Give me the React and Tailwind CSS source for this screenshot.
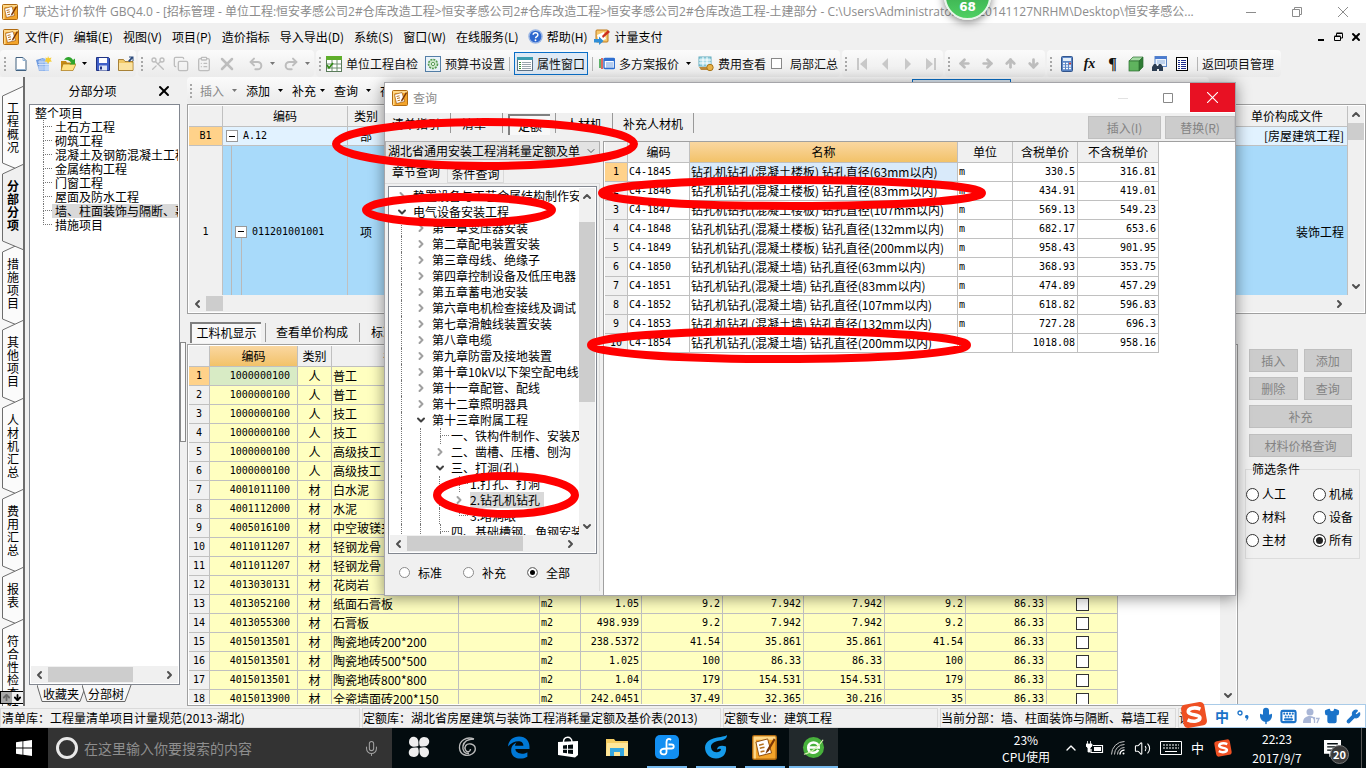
import React from "react";
import clsx from "clsx";
import {
  ArrowDown,
  ArrowLeft,
  ArrowRight,
  ArrowUp,
  ChevronDown,
  ChevronLeft,
  ChevronRight,
  ChevronUp,
  ClipboardList,
  Copy,
  Keyboard,
  Mic,
  Redo2,
  Scissors,
  Shirt,
  Undo2,
  Volume2,
  Wrench,
  X,
} from "lucide-react";

const sideTabs = ["工程概况", "分部分项", "措施项目", "其他项目", "人材机汇总", "费用汇总", "报表", "符合性检查结果"];

const sections = [
  "土石方工程",
  "砌筑工程",
  "混凝土及钢筋混凝土工程",
  "金属结构工程",
  "门窗工程",
  "屋面及防水工程",
  "墙、柱面装饰与隔断、幕墙工程",
  "措施项目",
];

const menus = ["文件(F)", "编辑(E)", "视图(V)", "项目(P)", "造价指标", "导入导出(D)", "系统(S)", "窗口(W)", "在线服务(L)"];

const materials = [
  ["1000000100", "人", "普工"],
  ["1000000100", "人", "普工"],
  ["1000000100", "人", "技工"],
  ["1000000100", "人", "技工"],
  ["1000000100", "人", "高级技工"],
  ["1000000100", "人", "高级技工"],
  ["4001011100", "材", "白水泥"],
  ["4001112000", "材", "水泥"],
  ["4005016100", "材", "中空玻镁夹"],
  ["4011011207", "材", "轻钢龙骨"],
  ["4011011207", "材", "轻钢龙骨"],
  ["4013030131", "材", "花岗岩"],
  ["4013052100", "材", "纸面石膏板", "m2", "1.05", "9.2", "7.942", "7.942", "9.2", "86.33"],
  ["4013055300", "材", "石膏板", "m2", "498.939", "9.2", "7.942", "7.942", "9.2", "86.33"],
  ["4015013501", "材", "陶瓷地砖200*200", "m2", "238.5372", "41.54", "35.861", "35.861", "41.54", "86.33"],
  ["4015013501", "材", "陶瓷地砖500*500", "m2", "1.025", "100", "86.33", "86.33", "100", "86.33"],
  ["4015013501", "材", "陶瓷地砖800*800", "m2", "1.04", "179", "154.531", "154.531", "179", "86.33"],
  ["4015013900", "材", "全瓷墙面砖200*150", "m2", "242.0451", "37.49", "32.365", "30.216", "35", "86.33"],
];

const quotas = [
  ["C4-1845", "楼板", "63", "330.5", "316.81"],
  ["C4-1846", "楼板", "83", "434.91", "419.01"],
  ["C4-1847", "楼板", "107", "569.13", "549.23"],
  ["C4-1848", "楼板", "132", "682.17", "653.6"],
  ["C4-1849", "楼板", "200", "958.43", "901.95"],
  ["C4-1850", "墙", "63", "368.93", "353.75"],
  ["C4-1851", "墙", "83", "474.89", "457.29"],
  ["C4-1852", "墙", "107", "618.82", "596.83"],
  ["C4-1853", "墙", "132", "727.28", "696.3"],
  ["C4-1854", "墙", "200", "1018.08", "958.16"],
];

// level, state, label
const chapters = [
  [0, "closed", "静置设备与工艺金属结构制作安装工程"],
  [0, "open", "电气设备安装工程"],
  [1, "closed", "第一章变压器安装"],
  [1, "closed", "第二章配电装置安装"],
  [1, "closed", "第三章母线、绝缘子"],
  [1, "closed", "第四章控制设备及低压电器"],
  [1, "closed", "第五章蓄电池安装"],
  [1, "closed", "第六章电机检查接线及调试"],
  [1, "closed", "第七章滑触线装置安装"],
  [1, "closed", "第八章电缆"],
  [1, "closed", "第九章防雷及接地装置"],
  [1, "closed", "第十章10kV以下架空配电线路"],
  [1, "closed", "第十一章配管、配线"],
  [1, "closed", "第十二章照明器具"],
  [1, "open", "第十三章附属工程"],
  [2, "leaf", "一、铁构件制作、安装及箱盒"],
  [2, "closed", "二、凿槽、压槽、刨沟"],
  [2, "open", "三、打洞(孔)"],
  [3, "leaf", "1.打孔、打洞"],
  [3, "closed", "2.钻孔机钻孔"],
  [3, "last", "3.堵洞眼"],
  [2, "leaf", "四、基础槽钢、角钢安装"],
];

const AppIcon = ({ className = "size-4" }) => (
  <svg viewBox="0 0 16 16" className={clsx("shrink-0", className)}>
    <rect x="0.5" y="0.5" width="15" height="15" rx="1" fill="#f3a42a" stroke="#b06a10" />
    <path d="M1 1h14v2H1zM1 1h1.500v14H1z" fill="#ffd98a" />
    <path d="M2.500 4.500 L10 2.500 L12.500 11.500 L4.500 13.500Z" fill="#fff" stroke="#8d4a0a" strokeWidth="0.6" />
    <path d="M4.500 6.500 L7.500 5.800 M5 8.500 L8 7.800 M5.500 10.800 L8 10.200" stroke="#b5701e" strokeWidth="1" />
    <path d="M14 2 L9.500 9.500 L8.600 12 L10.800 10.300 L15 3Z" fill="#7a3606" />
  </svg>
);

const Icon = ({ children }) => (
  <svg viewBox="0 0 16 16" className="size-4 shrink-0">
    {children}
  </svg>
);

const NewIcon = () => (
  <Icon>
    <path d="M3 1.500h7l3 3v10H3z" fill="#fff" stroke="#41607f" />
    <path d="M10 1.500v3h3M4 13.500h8" stroke="#8fb0d0" fill="none" />
  </Icon>
);
const BuildingIcon = () => (
  <Icon>
    <path d="M0 4l7-2v13H3z" fill="#6f9be0" />
    <path d="M7 2l6 2v11H7z" fill="#8db4ee" />
    <path d="M2 6h11M2 8.500h11M2 11h11M2 13h11M4 4v11M6 3v12M10 3v12M12 4v11" stroke="#eaf2ff" strokeWidth="0.7" />
    <path d="M12 0l1 2.200 2.500-.7-1 2.300 1.500 1.700-2.500.2L12 8l-1-2.300-2.500-.2L10 3.800 9.500 1.500l2 .7z" fill="#f5cd35" />
  </Icon>
);
const OpenIcon = () => (
  <Icon>
    <path d="M1 5h5l1 1.500h6V14H1z" fill="#c58a16" />
    <path d="M3 8h13l-3 6.500H1z" fill="#ffe183" stroke="#a87410" strokeWidth="0.7" />
    <path d="M4 4c2-4 7-4 9 0l2-1.500V8.500H9.500l1.800-1.700C9.500 4.500 7 3.500 4 4z" fill="#2fa52c" />
  </Icon>
);
const SaveIcon = () => (
  <Icon>
    <path d="M1.500 1.500h12l1 1v12h-13z" fill="#4060c8" stroke="#1f3282" />
    <rect x="4" y="2" width="8" height="5" fill="#fff" />
    <rect x="4" y="9.500" width="8" height="5" fill="#dfe6f7" />
    <rect x="5" y="10.500" width="2" height="3" fill="#1f3282" />
  </Icon>
);
const FolderIcon = () => (
  <Icon>
    <path d="M.5 3.500h5l1.500 2h8v9H.5z" fill="#f0c765" stroke="#94691b" strokeWidth="0.8" />
    <path d="M1 7h13.500v7H1z" fill="#fbe2a0" />
    <path d="M10 5l3-3.500h-2V.5h4.500V5h-1V2.500L11.500 6z" fill="#2b4a7c" />
  </Icon>
);
const CheckTableIcon = () => (
  <Icon>
    <rect x="0.5" y="0.5" width="15" height="15" fill="#fff" stroke="#5b7c5b" />
    <rect x="0" y="0" width="16" height="4" fill="#5fae2b" />
    <path d="M1 8h14M1 12h14M6 4v11M11 4v11" stroke="#6f8f6f" />
    <path d="M1 9l2 3 4-5" stroke="#2f8a11" strokeWidth="1.600" fill="none" />
  </Icon>
);
const GearIcon = () => (
  <Icon>
    <rect x="0.5" y="0.5" width="15" height="15" fill="#eaf3fa" stroke="#547fa8" />
    <circle cx="8" cy="8" r="4.500" fill="#cfe8cc" stroke="#559a52" strokeWidth="1.600" strokeDasharray="2 1" />
    <circle cx="8" cy="8" r="1.600" fill="#fff" stroke="#559a52" />
  </Icon>
);
const PropertyIcon = () => (
  <Icon>
    <rect x="0.5" y="1.500" width="15" height="13" fill="#fff" stroke="#5d7387" />
    <rect x="0" y="1" width="16" height="3" fill="#3c9cb0" />
    <path d="M2 6.500h2M2 8.500h2M2 10.500h2M2 12.500h2" stroke="#3d8f3a" />
    <path d="M5 6.500h9M5 8.500h9M5 10.500h9M5 12.500h9" stroke="#9aa5ad" />
  </Icon>
);
const PlansIcon = () => (
  <Icon>
    <path d="M1 3v9" stroke="#2d9c3c" strokeWidth="1.500" />
    <path d="M3 2v11" stroke="#d43b2f" strokeWidth="1.500" />
    <rect x="5" y="2.500" width="10.500" height="10" rx="1" fill="#fff" stroke="#2f6fd0" strokeWidth="1.400" />
    <path d="M5 4h10.500" stroke="#2f6fd0" strokeWidth="2" />
    <path d="M7 7h7M7 9h7M7 11h7" stroke="#6a9be0" />
  </Icon>
);
const FeeIcon = () => (
  <Icon>
    <rect x="1" y="1" width="12" height="9" fill="#a8dbe6" stroke="#5fa9bc" />
    <path d="M1 4h12M1 7h12M5 1v9M9 1v9" stroke="#fff" />
    <path d="M1 11h10v3H3z" fill="#bc8a3c" />
    <circle cx="12" cy="11.500" r="3.200" fill="#e9b349" stroke="#a9751a" />
  </Icon>
);
const CalcIcon = () => (
  <Icon>
    <rect x="2.500" y="0.5" width="11" height="15" rx="1" fill="#5b86c7" stroke="#33568e" />
    <rect x="4" y="2" width="8" height="3" fill="#e4eef8" />
    <path d="M4 7.500h8M4 10h8M4 12.500h8" stroke="#fff" strokeWidth="1.500" strokeDasharray="2 1" />
    <path d="M10 7.500h2" stroke="#d43b2f" strokeWidth="1.500" />
  </Icon>
);
const CubeIcon = () => (
  <Icon>
    <path d="M1 5l4-4h10l-4 4z" fill="#a5dba4" stroke="#2c6e30" strokeWidth="0.7" />
    <path d="M11 5l4-4v10l-4 4z" fill="#2f7c35" stroke="#2c6e30" strokeWidth="0.7" />
    <rect x="1" y="5" width="10" height="10" fill="#5fb35e" stroke="#2c6e30" strokeWidth="0.7" />
  </Icon>
);
const FindIcon = () => (
  <Icon>
    <rect x="4" y="0.5" width="11.500" height="10" fill="#eef4fb" stroke="#5b86c7" />
    <rect x="4" y="0.500" width="11.500" height="2.500" fill="#4a7bd0" />
    <path d="M6 5h8M6 7h8" stroke="#8fb0dd" />
    <path d="M1 11l2-3h2l1 2h1l1-2h2l2 3v4H8v-2H6v2H1z" fill="#2c3d52" />
  </Icon>
);
const ListIcon = () => (
  <Icon>
    <rect x="2.500" y="1.500" width="11" height="13" fill="#fff" stroke="#000" />
    <path d="M4 4.500h2M4 6.500h2M4 8.500h2M4 10.500h2M4 12.500h2M7 4.500h5M7 6.500h5M7 8.500h5M7 10.500h5M7 12.500h5" stroke="#1b2a8c" />
  </Icon>
);

const Caret = ({ muted }) => (
  <svg viewBox="0 0 5 3" className="w-[5px] h-[3px] shrink-0">
    <path d="M0 0h5L2.500 3z" fill={muted ? "#777" : "#000"} />
  </svg>
);

const Grip = () => <span className="w-[3px] h-[14px] mx-[2px] border-l-2 border-dotted border-[#a8a8a8] shrink-0" />;
const Sep = () => <span className="w-px h-[14px] bg-[#b5b5b5] shrink-0" />;

const Band = ({ children, className }) => (
  <div
    className={clsx(
      "flex items-center h-[27px] shrink-0 rounded-sm bg-linear-to-b from-[#fbfbfb] to-[#ebebeb] whitespace-nowrap",
      className
    )}
  >
    {children}
  </div>
);

const IconButton = ({ label, children, className }) => (
  <button aria-label={label} className={clsx("flex items-center justify-center h-6 shrink-0", className || "w-[23px]")}>
    {children}
  </button>
);

const HScroll = ({ thumb }) => (
  <div className="flex h-[17px] shrink-0 items-center bg-[#f0f0f0] text-[#505050]">
    <ChevronLeft className="w-[17px] h-3 shrink-0" strokeWidth={4} />
    <div className="flex-1 h-[15px] min-w-0">
      <div className={clsx("h-full bg-[#cdcdcd]", thumb)} />
    </div>
    <ChevronRight className="w-[17px] h-3 shrink-0" strokeWidth={4} />
  </div>
);

const VScroll = ({ thumb }) => (
  <div className="flex flex-col w-[16px] shrink-0 items-center bg-[#f0f0f0] text-[#505050]">
    <ChevronUp className="h-[17px] w-3 shrink-0" strokeWidth={4} />
    <div className="flex-1 w-full min-h-0">
      <div className={clsx("w-full bg-[#cdcdcd]", thumb)} />
    </div>
    <ChevronDown className="h-[17px] w-3 shrink-0" strokeWidth={4} />
  </div>
);

const TitleBar = () => (
  <header className="flex items-center h-[23px] shrink-0 bg-white pl-[2px] text-[#8c8c8c]">
    <AppIcon />
    <h1 className="ml-[5px] flex-1 truncate font-['Open_Sans','Noto_Sans_CJK_SC',sans-serif]">
      广联达计价软件 GBQ4.0 - [招标管理 - 单位工程:恒安孝感公司2#仓库改造工程&gt;恒安孝感公司2#仓库改造工程&gt;恒安孝感公司2#仓库改造工程-土建部分
      - C:\Users\Administrator.PC-20141127NRHM\Desktop\恒安孝感公...
    </h1>
    <div className="flex">
      <IconButton label="最小化" className="w-[46px]">
        <svg viewBox="0 0 10 10" className="size-[10px]" stroke="#8c8c8c">
          <path d="M0 5.500h10" />
        </svg>
      </IconButton>
      <IconButton label="还原" className="w-[46px]">
        <svg viewBox="0 0 10 10" className="size-[10px]" stroke="#8c8c8c" fill="none">
          <path d="M.5 2.500h7v7h-7zM2.500 2.500v-2h7v7h-2" />
        </svg>
      </IconButton>
      <IconButton label="关闭" className="w-[46px]">
        <svg viewBox="0 0 10 10" className="size-[10px]" stroke="#8c8c8c">
          <path d="M0 0l10 10M10 0L0 10" />
        </svg>
      </IconButton>
    </div>
  </header>
);

const MenuBar = () => (
  <nav className="flex items-center h-[27px] shrink-0 pl-[3px]">
    <AppIcon />
    <div className="flex gap-[10px] ml-[6px] whitespace-nowrap">
      {menus.map((menu) => (
        <button key={menu}>{menu}</button>
      ))}
    </div>
    <button className="flex items-center gap-1 ml-[9px] whitespace-nowrap">
      <svg viewBox="0 0 16 16" className="size-[15px]">
        <circle cx="8" cy="8" r="7" fill="#2e68cf" stroke="#9cb7e4" strokeWidth="1.500" />
        <path d="M5.500 6.200c.2-3 5.200-3 5 .1 0 1.800-2.400 1.800-2.400 3.500" stroke="#fff" strokeWidth="1.600" fill="none" />
        <circle cx="8" cy="12" r="1" fill="#fff" />
      </svg>
      帮助(H)
    </button>
    <button className="flex items-center gap-1 ml-[7px] whitespace-nowrap">
      <Icon>
        <rect x="2" y="1" width="12" height="12" rx="1" fill="#f6c76b" stroke="#c07a1a" />
        <path d="M3 6l7-3 2 7-7 3z" fill="#fff" />
        <path d="M8 7l6-6 2 2-7 6z" fill="#cc2e1e" />
        <path d="M0 10h5V7.500L9.500 12 5 16v-2.500H0z" fill="#2f8fd8" />
      </Icon>
      计量支付
    </button>
    <div className="flex items-center ml-auto pr-px">
      <IconButton label="最小化子窗口" className="w-[18px]">
        <svg viewBox="0 0 8 8" className="size-[8px]">
          <path d="M1 7h6" stroke="#000" strokeWidth="2" />
        </svg>
      </IconButton>
      <IconButton label="还原子窗口" className="w-[17px]">
        <svg viewBox="0 0 9 9" className="size-[9px]" fill="none" stroke="#000">
          <path d="M.5 4.500h6v4h-6zM.5 4h6M2.500 4V1.500h6v4.500H7M2.500 1h6" />
        </svg>
      </IconButton>
      <IconButton label="关闭子窗口" className="w-[18px]">
        <X className="size-3" strokeWidth={4} />
      </IconButton>
    </div>
  </nav>
);

const Toolbar = () => (
  <div className="flex gap-[2px] h-[27px] shrink-0 text-[#111]">
    <Band className="w-[136px] pl-[2px]">
      <Grip />
      <IconButton label="新建"><NewIcon /></IconButton>
      <IconButton label="新建单位工程"><BuildingIcon /></IconButton>
      <IconButton label="打开" className="w-[36px] gap-[6px]"><OpenIcon /><Caret /></IconButton>
      <IconButton label="保存"><SaveIcon /></IconButton>
      <IconButton label="另存"><FolderIcon /></IconButton>
    </Band>
    <Band className="w-[176px] pl-[1px] text-[#bdbdbd]">
      <Grip />
      <IconButton label="剪切"><Scissors className="size-4 rotate-90" /></IconButton>
      <IconButton label="复制"><Copy className="size-4" /></IconButton>
      <IconButton label="粘贴"><ClipboardList className="size-4" /></IconButton>
      <IconButton label="删除"><X className="size-5" strokeWidth={3} /></IconButton>
      <span className="px-[3px]"><Sep /></span>
      <IconButton label="撤销" className="w-[34px] gap-[6px]"><Undo2 className="size-4" strokeWidth={3} /><Caret muted /></IconButton>
      <IconButton label="重做" className="w-[36px] gap-[6px]"><Redo2 className="size-4" strokeWidth={3} /><Caret muted /></IconButton>
    </Band>
    <Band className="w-[524px] pl-[1px]">
      <Grip />
      <button className="flex items-center gap-1 ml-[2px]"><CheckTableIcon />单位工程自检</button>
      <button className="flex items-center gap-1 ml-[7px]"><GearIcon />预算书设置</button>
      <span className="flex px-[4px]"><Sep /></span>
      <button className="flex items-center gap-1 h-[23px] px-[2px] border border-[#0a6fc8] bg-[#dfeaf5]"><PropertyIcon />属性窗口</button>
      <span className="flex px-[4px]"><Sep /></span>
      <button className="flex items-center gap-1 ml-[2px]"><PlansIcon />多方案报价</button>
      <span className="px-[7px]"><Caret /></span>
      <button className="flex items-center gap-1"><FeeIcon />费用查看</button>
      <label className="flex items-center gap-2 ml-[5px]">
        <input type="checkbox" className="appearance-none size-[11px] border border-[#888] bg-white" />
        局部汇总
      </label>
    </Band>
    <Band className="w-[101px] pl-[1px]">
      <Grip />
      {["M1 0v12h2V0zM11 0v12L4 6z", "M9 0v12L3 6z", "M3 0v12l6-6z", "M1 0v12l7-6zM9 0h2v12H9z"].map((d, i) => (
        <IconButton key={d} label={["首条", "上一条", "下一条", "末条"][i]}>
          <svg viewBox="0 0 12 12" className="size-3"><path d={d} fill="#c8c8c8" /></svg>
        </IconButton>
      ))}
    </Band>
    <Band className="w-[100px] pl-[1px] text-[#bdbdbd]">
      <Grip />
      <IconButton label="左移"><ArrowLeft className="size-[13px]" strokeWidth={5} /></IconButton>
      <IconButton label="右移"><ArrowRight className="size-[13px]" strokeWidth={5} /></IconButton>
      <IconButton label="上移"><ArrowUp className="size-[13px]" strokeWidth={5} /></IconButton>
      <IconButton label="下移"><ArrowDown className="size-[13px]" strokeWidth={5} /></IconButton>
    </Band>
    <Band className="w-[234px] pl-[1px]">
      <Grip />
      <IconButton label="计算器"><CalcIcon /></IconButton>
      <IconButton label="函数"><i className="font-['Liberation_Serif',serif] font-bold text-[14px]">fx</i></IconButton>
      <IconButton label="特殊符号"><b className="font-['Liberation_Serif',serif] text-[16px]">¶</b></IconButton>
      <IconButton label="图元"><CubeIcon /></IconButton>
      <IconButton label="查找"><FindIcon /></IconButton>
      <IconButton label="清单列表"><ListIcon /></IconButton>
      <span className="flex px-[4px]"><Sep /></span>
      <button>返回项目管理</button>
    </Band>
  </div>
);

const SideTabs = () => (
  <div className="flex flex-col w-[25px] shrink-0 pt-[11px] relative overflow-hidden bg-[#f7f7f7] border-r-2 border-[#6d6d6d]">
    {sideTabs.map((tab) => {
      const h = tab.length * 13 + 26;
      const active = tab === "分部分项";
      return (
        <button
          key={tab}
          className={clsx("relative shrink-0 py-[13px] flex justify-center", active && "font-bold z-10")}
        >
          <svg width="25" height={h} className="absolute left-0 top-0 overflow-visible">
            <path
              d={`M24 -2 L2.500 8 V${h - 3} L24 ${h + 6}`}
              fill={active ? "#f0f0f0" : "#fbfbfb"}
              stroke="#6d6d6d"
            />
          </svg>
          <span className="relative w-3 ml-[3px] leading-[13px] break-all">{tab}</span>
        </button>
      );
    })}
    <div className="absolute bottom-[2px] left-0 z-20 flex border border-black bg-[#f0f0f0]">
      <button aria-label="上翻" className="size-[11px] bg-[#a9a9a9] flex items-center justify-center text-[#666]">
        <ArrowUp className="size-[9px]" strokeWidth={5} />
      </button>
      <button aria-label="下翻" className="size-[11px] flex items-center justify-center">
        <ArrowDown className="size-[9px]" strokeWidth={5} />
      </button>
    </div>
  </div>
);

const SectionPanel = () => (
  <aside className="flex flex-col w-[155px] shrink-0 pl-1">
    <div className="flex items-center justify-center h-[27px] shrink-0 relative">
      <h2 className="mr-[24px]">分部分项</h2>
      <button aria-label="关闭面板" className="absolute right-2">
        <X className="size-4" strokeWidth={3} />
      </button>
    </div>
    <div className="flex flex-col flex-1 min-h-0 border border-[#828790] bg-white p-[1px]">
      <div className="flex-1 overflow-hidden">
        <div className="pl-[4px] leading-[14px]">整个项目</div>
        <ul>
          {sections.map((name, i) => (
            <li key={name} className="flex h-[14px] leading-[14px] whitespace-nowrap pl-[12px]">
              <span className="w-[9px] shrink-0 flex flex-col">
                <span className="h-[7px] border-l border-b border-dotted border-[#777]" />
                {i < sections.length - 1 && <span className="h-[7px] border-l border-dotted border-[#777]" />}
              </span>
              <span className={clsx("px-[3px]", i === 6 && "bg-[#d9d9d9]")}>{name}</span>
            </li>
          ))}
        </ul>
      </div>
      <HScroll thumb="w-3/4" />
    </div>
    <div className="flex h-[21px] shrink-0 pl-[8px]">
      {["收藏夹", "分部树"].map((tab) => (
        <button key={tab} className="relative w-[45px] h-[17px] leading-[17px] text-center">
          <svg viewBox="0 0 50 17" className="absolute left-0 top-0 w-[50px] h-[17px]">
            <path d="M0 0l5 16.500h38L49 0" fill="#f7f7f7" stroke="#666" />
          </svg>
          <span className="relative ml-[3px]">{tab}</span>
        </button>
      ))}
    </div>
  </aside>
);

const cell = "border-r border-b border-[#c0c0c0] overflow-hidden whitespace-nowrap";
const num = "font-['DejaVu_Sans_Mono',monospace] text-[10px]";

const Expander = () => (
  <span className="inline-flex items-center justify-center size-[12px] border border-[#999] bg-white shrink-0">
    <span className="w-[6px] h-px bg-black" />
  </span>
);

const BillGrid = () => (
  <div className="flex flex-col h-[210px] shrink-0 border border-[#a0a0a0] p-px bg-white">
    <div className="flex flex-1 min-h-0">
      <div className="flex-1 min-w-0 overflow-hidden">
        <table className="table-fixed border-separate border-spacing-0 w-full leading-[16px]">
          <colgroup>
            <col className="w-[34px]" />
            <col className="w-[125px]" />
            <col className="w-[37px]" />
            <col />
            <col className="w-[121px]" />
          </colgroup>
          <thead>
            <tr className="h-[21px] bg-[#f0f0f0]">
              {["", "编码", "类别", "", "单价构成文件"].map((name, i) => (
                <th key={i} className={clsx(cell, "font-normal")}>{name}</th>
              ))}
            </tr>
          </thead>
          <tbody>
            <tr className="h-[19px] bg-[#e1f2ff]">
              <th className={clsx(cell, num, "bg-[#ffd28a] font-normal text-center")}>B1</th>
              <td className={cell}>
                <div className="flex items-center gap-[5px] pl-[3px]">
                  <Expander />
                  <span className={num}>A.12</span>
                </div>
              </td>
              <td className={clsx(cell, "text-center")}>部</td>
              <td className={cell} />
              <td className={clsx(cell, "text-right pr-[3px]")}>[房屋建筑工程]</td>
            </tr>
            <tr className="h-[172px] bg-[#a8dafa]">
              <th className={clsx(cell, num, "bg-[#f0f0f0] font-normal text-center")}>1</th>
              <td className={clsx(cell, "p-0")}>
                <div className="flex h-[171px] pl-[8px]">
                  <span className="w-[4px] border-l border-[#b9b9b9]" />
                  <div className="flex flex-col items-center w-[12px]">
                    <span className="flex-1" />
                    <Expander />
                    <span className="flex-1 border-l border-[#b9b9b9]" />
                  </div>
                  <span className={clsx(num, "self-center ml-[5px]")}>011201001001</span>
                </div>
              </td>
              <td className={clsx(cell, "text-center")}>项</td>
              <td className={cell} />
              <td className={clsx(cell, "text-right pr-[3px]")}>装饰工程</td>
            </tr>
          </tbody>
        </table>
      </div>
      <VScroll thumb="h-[17px]" />
    </div>
    <div className="pr-[16px] bg-[#f0f0f0]">
      <HScroll thumb="w-[17px]" />
    </div>
  </div>
);

const MaterialGrid = () => (
  <div className="flex flex-1 min-w-0 border border-[#a0a0a0] p-px bg-white">
    <div className="flex-1 min-w-0 overflow-hidden">
      <table className="table-fixed border-separate border-spacing-0 w-[929px] leading-[16px]">
        <colgroup>
          <col className="w-[21px]" />
          <col className="w-[88px]" />
          <col className="w-[34px]" />
          <col className="w-[127px]" />
          <col className="w-[81px]" />
          <col className="w-[41px]" />
          <col className="w-[61px]" />
          <col className="w-[81px]" />
          <col className="w-[81px]" />
          <col className="w-[81px]" />
          <col className="w-[81px]" />
          <col className="w-[81px]" />
          <col className="w-[71px]" />
        </colgroup>
        <thead>
          <tr className="h-[21px] bg-[#f0f0f0]">
            {["", "编码", "类别", "名称", "", "", "", "", "", "", "", "", ""].map((name, i) => (
              <th
                key={i}
                className={clsx(cell, "font-normal", i === 1 && "bg-linear-to-b from-[#fad7a0] to-[#f2c268]")}
              >
                {name}
              </th>
            ))}
          </tr>
        </thead>
        <tbody>
          {materials.map(([code, kind, name, unit, ...values], i) => (
            <tr key={i} className="h-[19px] bg-[#ffffc0]">
              <th className={clsx(cell, num, "font-normal text-center", i === 0 ? "bg-[#ffd28a]" : "bg-[#f0f0f0]")}>
                {i + 1}
              </th>
              <td className={clsx(cell, num, "text-right pr-[7px]", i === 0 && "bg-[#d8ebc5]")}>{code}</td>
              <td className={clsx(cell, "text-center")}>{kind}</td>
              <td className={clsx(cell, "pl-px")}>{name}</td>
              <td className={cell} />
              <td className={clsx(cell, num, "pl-px")}>{unit}</td>
              {[0, 1, 2, 3, 4, 5].map((n) => (
                <td key={n} className={clsx(cell, num, "text-right pr-[2px]")}>{values[n]}</td>
              ))}
              <td className={clsx(cell, "p-0")}>
                <input
                  type="checkbox"
                  aria-label={`第${i + 1}行`}
                  className="appearance-none block mx-auto size-[13px] border border-[#333] bg-white"
                />
              </td>
            </tr>
          ))}
        </tbody>
      </table>
    </div>
    <VScroll thumb="h-1/2" />
  </div>
);

const GrayButton = ({ children, className }) => (
  <button disabled className={clsx("h-[23px] border border-[#bfbfbf] bg-[#cccccc] text-[#838383]", className)}>
    {children}
  </button>
);

const FilterPanel = () => (
  <div className="w-[128px] shrink-0 pt-[5px] pl-[7px] pr-[6px]">
    <div className="grid grid-cols-2 gap-x-[6px] gap-y-[5px] pl-1 pr-2">
      <GrayButton>插入</GrayButton>
      <GrayButton>添加</GrayButton>
      <GrayButton>删除</GrayButton>
      <GrayButton>查询</GrayButton>
      <GrayButton className="col-span-2">补充</GrayButton>
      <GrayButton className="col-span-2 mt-px">材料价格查询</GrayButton>
    </div>
    <fieldset className="mt-[4px] h-[98px] border border-[#dcdcdc]">
      <legend className="ml-[6px] leading-[16px]">筛选条件</legend>
      <div className="grid grid-cols-[67px_auto] gap-y-[7px] pt-[9px]">
        {["人工", "机械", "材料", "设备", "主材", "所有"].map((name) => (
          <label key={name} className="flex items-center gap-[3px] leading-[16px] whitespace-nowrap">
            <input
              type="radio"
              name="filter"
              defaultChecked={name === "所有"}
              className="appearance-none size-[13px] shrink-0 rounded-full border border-[#333] bg-white checked:bg-[#222] checked:shadow-[inset_0_0_0_2px_white]"
            />
            {name}
          </label>
        ))}
      </div>
    </fieldset>
  </div>
);

const Workspace = () => (
  <main className="flex flex-col flex-1 min-w-0">
    <div className="flex shrink-0 h-[27px] items-center">
      <Band className="w-[1022px] pl-[1px]">
        <Grip />
        <button className="flex items-center gap-2 ml-[5px] text-[#8a8a8a]">插入 <Caret muted /></button>
        <button className="flex items-center gap-2 ml-[9px]">添加 <Caret /></button>
        <button className="flex items-center gap-1 ml-[9px]">补充 <Caret /></button>
        <button className="flex items-center gap-2 ml-[9px]">查询 <Caret /></button>
        <button className="ml-[9px]">存档</button>
        <span className="ml-auto mr-[198px] w-[99px] h-[23px] border border-[#0a6fc8] bg-[#dfeaf5]" />
      </Band>
    </div>
    <BillGrid />
    <div className="flex items-center h-[30px] shrink-0 pl-[3px] pt-[6px]">
      <button className="h-[21px] w-[71px] border-t-2 border-l-2 border-[#808080] bg-[#f8f8f8]">工料机显示</button>
      <span className="w-px h-[19px] bg-[#999] ml-1" />
      <button className="ml-[10px]">查看单价构成</button>
      <span className="w-px h-[19px] bg-[#999] ml-[11px]" />
      <button className="ml-[11px]">标准换算</button>
    </div>
    <div className="flex flex-1 min-h-0">
      <MaterialGrid />
      <FilterPanel />
    </div>
  </main>
);

const guide = "border-l border-dotted border-[#777]";

const ChapterTree = () => (
  <ul className="flex-1 overflow-hidden pl-[2px]">
    {chapters.map(([level, state, name], i) => (
      <li key={name} className="flex h-4 leading-4 whitespace-nowrap">
        {[0, 1, 2].slice(0, level).map((n) => (
          <span key={n} className="w-[19px] shrink-0 pl-[9px] flex">
            <span className={guide} />
          </span>
        ))}
        <span className="w-[19px] mr-[2px] shrink-0 flex items-center justify-center">
          {state === "closed" && <ChevronRight className="size-3 text-[#a0a0a0]" strokeWidth={4} />}
          {state === "open" && <ChevronDown className="size-3 text-[#404040]" strokeWidth={4} />}
          {(state === "leaf" || state === "last") && (
            <span className="flex flex-col w-[9px] ml-[9px] h-full">
              <span className={clsx("h-2 border-b", guide)} />
              {state === "leaf" && <span className={clsx("h-2", guide)} />}
            </span>
          )}
        </span>
        <span className={clsx(i === 19 && "bg-[#d9d9d9] pr-1")}>{name}</span>
      </li>
    ))}
  </ul>
);

const QuotaGrid = () => (
  <div className="flex-1 min-w-0 border-t border-l border-[#a0a0a0] pl-px bg-white">
    <table className="table-fixed border-separate border-spacing-0 w-[554px] leading-[16px]">
      <colgroup>
        <col className="w-[23px]" />
        <col className="w-[62px]" />
        <col className="w-[268px]" />
        <col className="w-[55px]" />
        <col className="w-[65px]" />
        <col className="w-[81px]" />
      </colgroup>
      <thead>
        <tr className="h-[21px] bg-[#f0f0f0]">
          {["", "编码", "名称", "单位", "含税单价", "不含税单价"].map((name) => (
            <th
              key={name}
              className={clsx(cell, "font-normal", name === "名称" && "bg-linear-to-b from-[#fad7a0] to-[#f2c268]")}
            >
              {name}
            </th>
          ))}
        </tr>
      </thead>
      <tbody>
        {quotas.map(([code, part, size, taxed, untaxed], i) => (
          <tr key={code} className="h-[19px]">
            <th className={clsx(cell, num, "font-normal text-center", i === 0 ? "bg-[#ffd28a]" : "bg-[#f0f0f0]")}>
              {i + 1}
            </th>
            <td className={clsx(cell, num, "pl-px")}>{code}</td>
            <td className={clsx(cell, "pl-px", i === 0 && "bg-[#d9eafa]")}>
              {`钻孔机钻孔(混凝土${part}) 钻孔直径(${size}mm以内)`}
            </td>
            <td className={clsx(cell, num, "pl-px")}>m</td>
            <td className={clsx(cell, num, "text-right pr-[2px]")}>{taxed}</td>
            <td className={clsx(cell, num, "text-right pr-[2px]")}>{untaxed}</td>
          </tr>
        ))}
      </tbody>
    </table>
  </div>
);

const QueryDialog = () => (
  <section
    role="dialog"
    aria-label="查询"
    className="absolute left-[384px] top-[82px] w-[852px] h-[514px] z-30 flex flex-col border border-[#a5a5a9] bg-[#f0f0f0] shadow-[0_2px_14px_rgba(0,0,0,0.45)]"
  >
    <div className="flex items-center h-[30px] shrink-0 bg-white pl-[7px] text-[#8c8c8c]">
      <AppIcon />
      <h2 className="ml-[5px] flex-1">查询</h2>
      <IconButton label="最小化" className="w-[45px]">
        <svg viewBox="0 0 10 10" className="size-[10px]" stroke="#e2e2e2"><path d="M0 5.500h10" /></svg>
      </IconButton>
      <IconButton label="最大化" className="w-[45px]">
        <svg viewBox="0 0 10 10" className="size-[10px]" stroke="#888" fill="none"><path d="M.5.5h9v9h-9z" /></svg>
      </IconButton>
      <button aria-label="关闭" className="w-[45px] h-[29px] self-start bg-[#e81123] flex items-center justify-center">
        <svg viewBox="0 0 10 10" className="size-[11px]" stroke="#fff"><path d="M0 0l10 10M10 0L0 10" /></svg>
      </button>
    </div>
    <div className="flex h-[28px] shrink-0 whitespace-nowrap">
      {["清单指引", "清单", "定额", "人材机", "补充人材机"].map((tab) => (
        <React.Fragment key={tab}>
          <button
            className={clsx(
              "h-[21px]",
              tab === "清单指引" && "pl-[7px] pr-[10px]",
              tab === "清单" && "pl-[11px] pr-4",
              tab === "定额" && "w-[42px] mx-[5px] mt-px border-t-2 border-l-2 border-[#808080] bg-[#f8f8f8]",
              (tab === "人材机" || tab === "补充人材机") && "px-[10px]"
            )}
          >
            {tab}
          </button>
          <span className="w-px h-[20px] bg-[#999] shrink-0" />
        </React.Fragment>
      ))}
      <div className="flex gap-[4px] ml-auto pt-[3px]">
        <GrayButton className="w-[73px]">插入(I)</GrayButton>
        <GrayButton className="w-[70px]">替换(R)</GrayButton>
      </div>
    </div>
    <div className="flex flex-1 min-h-0">
      <div className="flex flex-col w-[218px] shrink-0 pr-[3px]">
        <div className="relative h-[19px] shrink-0">
          <select
            aria-label="定额库"
            className="appearance-none w-full h-full pl-[2px] leading-[17px] border border-[#b0b0b0] bg-[#e3e3e3]"
          >
            <option>湖北省通用安装工程消耗量定额及单</option>
          </select>
          <ChevronDown className="absolute right-[3px] top-[4px] size-3 text-[#555] pointer-events-none" />
        </div>
        <div className="flex h-[23px] pt-[2px] shrink-0">
          <button className="w-[62px] h-[20px] pl-[7px] text-left">章节查询</button>
          <button className="w-[57px] h-[18px] mt-[3px] leading-[16px] border border-[#d9d9d9]">条件查询</button>
        </div>
        <div className="flex flex-col flex-1 min-h-0 border-t border-r border-[#dcdcdc] mb-1 pl-[3px] pr-[2px] pt-[2px]">
          <div className="flex flex-col h-[368px] border border-[#828790] bg-white p-px">
            <div className="flex flex-1 min-h-0">
              <ChapterTree />
              <VScroll thumb="h-[180px] mt-[17px]" />
            </div>
            <div className="pr-[16px] bg-[#f0f0f0]">
              <HScroll thumb="w-3/4" />
            </div>
          </div>
          <div className="flex items-center gap-[21px] flex-1 pl-[11px]">
            {["标准", "补充", "全部"].map((name) => (
              <label key={name} className="flex items-center gap-[8px]">
                <input
                  type="radio"
                  name="scope"
                  defaultChecked={name === "全部"}
                  className="appearance-none size-[11px] rounded-full border border-[#8a8a8a] bg-white checked:bg-black checked:shadow-[inset_0_0_0_2px_white]"
                />
                {name}
              </label>
            ))}
          </div>
        </div>
      </div>
      <QuotaGrid />
    </div>
  </section>
);

// hand-drawn marks over the query window
const Marks = () => (
  <svg className="absolute left-0 top-0 z-40 pointer-events-none" width="1000" height="530" fill="none" stroke="#f00" strokeWidth="8">
    <ellipse cx="485" cy="144" rx="149" ry="22" />
    <ellipse cx="459" cy="210" rx="93" ry="13" />
    <ellipse cx="792" cy="193" rx="190" ry="13" />
    <ellipse cx="779" cy="345" rx="188" ry="14" />
    <ellipse cx="506" cy="495" rx="69" ry="19" />
  </svg>
);

const SogouMark = ({ className }) => (
  <svg viewBox="0 0 28 28" className={clsx("shrink-0", className)}>
    <rect x="3" y="3" width="22" height="22" rx="4" fill="#ef5023" transform="rotate(-10 14 14)" />
    <path d="M20 8.500C14 6 8.500 8 8.700 11c.3 3.500 10.500 2 10.800 5.500.2 3.200-6 4.500-11.500 2" stroke="#fff" strokeWidth="3.400" fill="none" />
  </svg>
);

const StatusBar = () => (
  <footer className="flex gap-[2px] h-[22px] shrink-0 pt-[2px] relative leading-[18px] whitespace-nowrap bg-[#f0f0f0]">
    <p className="w-[360px] shrink-0 pl-px border border-[#dadada]">清单库：工程量清单项目计量规范(2013-湖北)</p>
    <p className="w-[359px] shrink-0 border border-[#dadada]">定额库：湖北省房屋建筑与装饰工程消耗量定额及基价表(2013)</p>
    <p className="w-[215px] shrink-0 border border-[#dadada]">定额专业：建筑工程</p>
    <p className="w-[236px] shrink-0 border border-[#dadada]">当前分部：墙、柱面装饰与隔断、幕墙工程</p>
    <p className="flex-1 min-w-0 overflow-hidden border border-[#dadada]">设</p>
    <div className="absolute right-0 bottom-0 z-20 flex items-center h-[24px] w-[178px] pl-[22px] bg-white border border-[#a9cbe8] text-[#1b73c9]">
      <SogouMark className="absolute -left-[10px] -top-[5px] size-[30px]" />
      <b className="w-[22px] text-center text-[14px]">中</b>
      <svg viewBox="0 0 16 16" className="size-4 mx-[3px]">
        <circle cx="4" cy="5" r="2" fill="none" stroke="#1b73c9" strokeWidth="1.300" />
        <path d="M9 8.500a1.800 1.800 0 013.500 0c0 2.500-1 3.500-3 4.500 1-1 1.300-1.700 1.200-2.500-1 0-1.700-1-1.700-2z" fill="#1b73c9" />
      </svg>
      <Mic className="size-[18px] mx-[2px]" fill="#1b73c9" />
      <Keyboard className="size-[17px] mx-[3px]" strokeWidth={3} />
      <svg viewBox="0 0 18 16" className="w-[18px] h-4 mx-[2px]" fill="#a9b6d6">
        <circle cx="8" cy="4" r="3.500" />
        <path d="M1 15c0-5 3-7 7-7 3 0 4 1 5 2H9v5z" />
        <path d="M11 11l1.500-1v5M14 10.500h3L15 15" stroke="#a9b6d6" fill="none" strokeWidth="1.300" />
      </svg>
      <Shirt className="size-4 mx-[2px]" fill="#1b73c9" />
      <Wrench className="size-[15px] ml-[4px]" fill="#1b73c9" />
    </div>
  </footer>
);

const TaskApp = ({ label, running, active, width = "w-[49px]", children }) => (
  <button
    aria-label={label}
    className={clsx("h-full flex flex-col items-center shrink-0", width, active && "bg-[#22292c]")}
  >
    <span className="flex-1 flex items-center">{children}</span>
    <span className={clsx("h-[2px] bg-[#76b9ed]", running ? (active ? "w-full" : "w-10") : "w-0")} />
  </button>
);

const Taskbar = () => (
  <div className="flex h-[40px] shrink-0 bg-[#030c0f] text-white">
    <button aria-label="开始" className="w-[48px] bg-black flex items-center justify-center shrink-0">
      <svg viewBox="0 0 16 16" className="size-4" fill="#fff">
        <path d="M0 2.200l6.500-.9v6.200H0zM7.300 1.200L16 0v7.500H7.300zM0 8.400h6.500v6.300L0 13.800zM7.300 8.400H16V16l-8.700-1.200z" />
      </svg>
    </button>
    <div className="flex items-center w-[344px] shrink-0 bg-[#333] px-2">
      <span className="size-[22px] rounded-full border-[3px] border-[#e8e8e8] shrink-0" />
      <input
        aria-label="搜索"
        placeholder="在这里输入你要搜索的内容"
        className="flex-1 min-w-0 ml-[6px] text-[14px] bg-transparent placeholder:text-[#8e8e8e]"
      />
      <Mic className="size-[17px] text-[#a0a0a0] mr-[4px]" strokeWidth={1.500} />
    </div>
    <div className="flex pl-[2px]">
      <TaskApp label="四叶草">
        <svg viewBox="0 0 22 22" className="size-[22px]" fill="#eee">
          <path d="M10.300 10C5 12 1 10 1 6s3-6 6-5c3 .8 4 4 3.300 9zM12 10.300C10 5 12 1 16 1s6 3 5 6c-.8 3-4 4-9 3.300zM11.700 12C17 10 21 12 21 16s-3 6-6 5c-3-.8-4-4-3.300-9zM10 11.700C12 17 10 21 6 21s-6-3-5-6c.8-3 4-4 9-3.300z" />
        </svg>
      </TaskApp>
      <TaskApp label="浏览器助手">
        <svg viewBox="0 0 22 22" className="size-[22px]" fill="none" stroke="#bbb" strokeWidth="1.400">
          <path d="M17 3C9 0 2 5 2.500 12S10 21 15 18s4-9-1-10-7 3-5.500 6 5 2 5-1M17 3C12 3 7 5 6 10s2 8 6 7.500" />
        </svg>
      </TaskApp>
      <TaskApp label="Edge" width="w-[53px]">
        <svg viewBox="0 0 22 22" className="size-[23px]" fill="#0078d7">
          <path d="M1 10C1.500 4 6 .5 11.500.5 18 .5 21.500 5 21.500 10v2.500H8c.2 4 6.500 6 11.500 3v4.300c-6 3.500-15.500 2-15.500-6C4 9.800 6.500 7.500 9 6.300 8 7.500 7.800 8.500 7.700 9.300h8C15.700 3 6 4 1 10z" />
        </svg>
      </TaskApp>
      <TaskApp label="应用商店" width="w-[46px]">
        <svg viewBox="0 0 22 22" className="size-[22px]">
          <path d="M1 6l20-1v14l-3 2.500L1 19z" fill="#fff" />
          <path d="M6.500 6c0-6 8.500-6.500 8.500 0" stroke="#fff" strokeWidth="1.400" fill="none" />
          <path d="M6 9.500l4-.4v3.600H6zM11 9l5-.5v4.200h-5zM6 13.700h4v3.600l-4-.5zM11 13.700h5V18l-5-.6z" fill="#030c0f" />
        </svg>
      </TaskApp>
      <TaskApp label="文件资源管理器" width="w-[51px]">
        <svg viewBox="0 0 22 18" className="w-[22px] h-[18px]">
          <path d="M0 1h8l1.500 2H22v15H0z" fill="#f5cd63" />
          <path d="M1 5h21v13H0z" fill="#ffe79a" />
          <path d="M4 10h14v8h-4v-4H8v4H4z" fill="#35a7e0" />
        </svg>
      </TaskApp>
      <TaskApp label="广联云" running>
        <svg viewBox="0 0 24 24" className="size-6">
          <rect width="24" height="24" rx="5" fill="#128ff2" />
          <path d="M16 5c-2-2-4.500-1-4.500 2v10c0 3.500-6 3-6-.500 0-3 3-3 6-3h5c3 0 3-4 0-4h-3" stroke="#fff" strokeWidth="1.800" fill="none" />
        </svg>
      </TaskApp>
      <TaskApp label="广联达" running>
        <svg viewBox="0 0 24 24" className="size-6">
          <path d="M23 0C20 3 2 1 1 12.500 1 19 6 23.500 12 23.500c7 0 11-5 10-12-5-2-9 0-9 3 2-1 4-1 4 0-1 4-9 4-10-2C6 7 14 6 19 5c3-1 4-3 4-5z" fill="#159bea" />
        </svg>
      </TaskApp>
      <TaskApp label="计价软件" running>
        <AppIcon className="size-[25px]" />
      </TaskApp>
      <TaskApp label="360浏览器" running active>
        <svg viewBox="0 0 24 24" className="size-[23px]">
          <circle cx="12" cy="12" r="11" fill="#48b13c" />
          <path d="M6.500 12h11C17.500 5 6.500 5 6.500 12S14.500 18.500 17 14.500" stroke="#fff" strokeWidth="2.600" fill="none" />
          <path d="M2 19C8 18 18 11 22 4" stroke="#d7f3b0" strokeWidth="1.200" fill="none" />
        </svg>
      </TaskApp>
    </div>
    <div className="flex items-center ml-auto h-full text-[12px]">
      <p className="w-[50px] mr-[12px] text-center leading-[17px]">23%<br />CPU使用</p>
      <ChevronUp className="size-4 mr-[7px]" strokeWidth={2} />
      <svg viewBox="0 0 18 14" className="w-[18px] h-[14px] mr-[6px]">
        <path d="M7 4.500h9.500v7H5V8" fill="none" stroke="#fff" strokeWidth="1.200" />
        <path d="M8 6h7v4H8z" fill="#fff" />
        <path d="M1.500 0v3M4.500 0v3M0 3h6v2L4 7v4H2V7L0 5z" fill="#fff" stroke="#fff" strokeWidth="0.8" />
      </svg>
      <svg viewBox="0 0 16 16" className="size-[16px] mr-[8px]" fill="none" stroke="#c5c5c5">
        <path d="M1.500 14.500a13 13 0 0113-13M4.500 14.500a10 10 0 0110-10M7.500 14.500a7 7 0 017-7" />
        <path d="M10 14.500a4.500 4.500 0 014.500-4.500" stroke="#fff" strokeWidth="1.500" />
        <circle cx="13.500" cy="13.500" r="1" fill="#fff" stroke="none" />
      </svg>
      <Volume2 className="size-[17px] mr-[9px]" strokeWidth={1.500} />
      <svg viewBox="0 0 22 14" className="w-[22px] h-[14px] mr-[9px]" fill="none" stroke="#fff">
        <path d="M.5.5h21v13H.5z" />
        <path d="M3 4h16M3 7h16" strokeDasharray="2 1" />
        <path d="M5 10.500h12" />
      </svg>
      <span className="text-[13px] mr-[9px]">中</span>
      <SogouMark className="size-[20px] mr-[17px]" />
      <p className="w-[54px] text-center leading-[19px]">22:23<br />2017/9/7</p>
      <button aria-label="通知" className="relative w-[58px] h-full flex items-center justify-center border-r border-[#555] mr-1">
        <svg viewBox="0 0 16 16" className="size-[17px]">
          <path d="M0 0h16v13H9l-4 3v-3H0z" fill="#fff" />
          <path d="M3 3.500h10M3 6.500h10M3 9.500h6" stroke="#030c0f" strokeWidth="1.300" />
        </svg>
        <span className="absolute right-[12px] bottom-[4px] size-[19px] rounded-full bg-[#3a3a3a] border border-[#777] text-[11px] font-bold leading-[17px] text-center">
          20
        </span>
      </button>
    </div>
  </div>
);

const App = () => (
  <div className="relative flex flex-col h-screen overflow-hidden bg-[#f0f0f0] text-[12px] leading-[18px] text-black font-['Noto_Sans_CJK_SC',sans-serif]">
    <TitleBar />
    <MenuBar />
    <Toolbar />
    <div className="flex flex-1 min-h-0">
      <SideTabs />
      <SectionPanel />
      <div className="flex items-center w-[7px] shrink-0">
        <span className="w-[6px] h-[100px] border border-[#888] bg-[#fafafa]" />
      </div>
      <Workspace />
    </div>
    <StatusBar />
    <Taskbar />
    <QueryDialog />
    <Marks />
    <div className="absolute left-[944px] -top-[27px] z-40 size-[47px] rounded-full border-2 border-[#e8f5ea] bg-linear-to-b from-[#2f9a45] to-[#4fd063] shadow-[0_2px_8px_rgba(0,0,0,0.5)] flex items-end justify-center pb-[4px] text-[12px] leading-[14px] font-bold text-white font-['DejaVu_Sans',sans-serif]">
      68
    </div>
  </div>
);

export default App;
